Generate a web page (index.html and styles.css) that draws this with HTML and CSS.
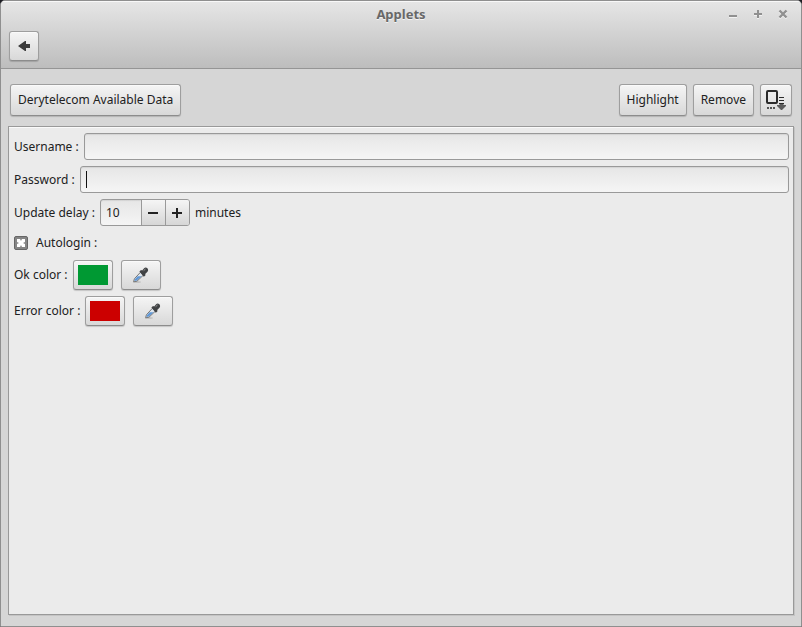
FILE: index.html
```html
<!DOCTYPE html>
<html lang="en">
<head>
<meta charset="utf-8">
<title>Applets</title>
<link rel="stylesheet" href="styles.css">
</head>
<body>
<div class="window">
  <header class="header">
    <div class="titlebar">
      <h1 class="title">Applets</h1>
      <div class="controls">
        <button class="control" type="button" aria-label="Minimize"><svg width="10" height="10" viewBox="0 0 10 10"><path d="M1 7h8" stroke-width="2"/></svg></button>
        <button class="control" type="button" aria-label="Maximize"><svg width="10" height="10" viewBox="0 0 10 10"><path d="M1 5h8M5 1v8" stroke-width="2"/></svg></button>
        <button class="control" type="button" aria-label="Close"><svg width="10" height="10" viewBox="0 0 10 10"><path d="M1.500 1.500l7 7M8.500 1.500l-7 7" stroke-width="2.400"/></svg></button>
      </div>
    </div>
    <nav class="navbar">
      <button class="button back" type="button" aria-label="Back"><svg width="12" height="10" viewBox="0 0 12 10"><path d="M0 5L7 0h1v3h4v4H8v3H7z" fill="#3c3c3c"/></svg></button>
    </nav>
  </header>
  <main class="content">
    <div class="toolbar">
      <button class="button" type="button">Derytelecom Available Data</button>
      <div class="actions">
        <button class="button" type="button">Highlight</button>
        <button class="button" type="button">Remove</button>
        <button class="button more" type="button" aria-label="More options">
          <svg width="20" height="20" viewBox="0 0 20 20">
            <rect x="1" y="1" width="10" height="12" rx="1" fill="none" stroke="#2b2b2b" stroke-width="2"/>
            <path d="M13 7.500h5M13 10.500h5M13 13.500h5" stroke="#2b2b2b"/>
            <path d="M13.500 14h4v1H20v1l-4 4h-1l-4-4v-1h2.500z" fill="#5c5c5c"/>
            <path d="M1 17h2v2H1zM4 17h2v2H4zM7 17h2v2H7z" fill="#555"/>
          </svg>
        </button>
      </div>
    </div>
    <form class="panel">
      <div class="row">
        <label for="username">Username :</label>
        <input class="field" id="username" type="text">
      </div>
      <div class="row">
        <label for="password">Password :</label>
        <div class="field-wrap"><input class="field" id="password" type="password"></div>
      </div>
      <div class="row">
        <label for="delay">Update delay :</label>
        <div class="spinner">
          <input class="spin-value" id="delay" type="text" inputmode="numeric" value="10">
          <button class="spin-step" type="button" aria-label="Decrease"><svg width="12" height="12" viewBox="0 0 12 12"><path d="M1 6h10" stroke="#222" stroke-width="2"/></svg></button>
          <button class="spin-step" type="button" aria-label="Increase"><svg width="12" height="12" viewBox="0 0 12 12"><path d="M1 6h10M6 1v10" stroke="#222" stroke-width="2"/></svg></button>
        </div>
        <span>minutes</span>
      </div>
      <div class="row row-check">
        <input class="check" id="autologin" type="checkbox" checked>
        <label for="autologin">Autologin :</label>
      </div>
      <div class="row">
        <label for="ok-color">Ok color :</label>
        <div class="color-group">
          <input class="button swatch" id="ok-color" type="color" value="#009933">
          <button class="button picker" type="button" aria-label="Pick ok color"><svg width="16" height="16" viewBox="0 0 16 16"><use href="#dropper"/></svg></button>
        </div>
      </div>
      <div class="row">
        <label for="error-color">Error color :</label>
        <div class="color-group">
          <input class="button swatch" id="error-color" type="color" value="#cc0000">
          <button class="button picker" type="button" aria-label="Pick error color"><svg width="16" height="16" viewBox="0 0 16 16"><use href="#dropper"/></svg></button>
        </div>
      </div>
    </form>
  </main>
</div>
<svg class="symbols" aria-hidden="true">
  <symbol id="dropper" viewBox="0 0 16 16">
    <ellipse cx="4" cy="15" rx="4" ry="1" fill="#000" opacity=".12"/>
    <path d="M0.600 14.800L1.400 11.800 7.500 5.200l3 2.800L4 14.200z" fill="#dfe6ee" stroke="#777" stroke-width="1"/>
    <path d="M1.300 14.100l.8-2L4.700 9.300h4L3.800 13.600z" fill="#5f97d6"/>
    <path d="M6.400 4.600L8 3l1.200.4 1.900-2.200Q12.600-.2 14.400 1.200 15.800 3 14.500 4.800L12.200 7l.3 1.300-1.700 1.500z" fill="#404244"/>
    <path d="M10.600 3.700l1.900-1.700" stroke="#999" stroke-width="1"/>
  </symbol>
</svg>
</body>
</html>
```
FILE: styles.css
```css
* {
  box-sizing: border-box;
}

body {
  margin: 0;
  background: #1c1c22;
  color: #212121;
  font: 12px/16px "Noto Sans", sans-serif;
}

input,
button {
  margin: 0;
  font: inherit;
  color: inherit;
}

svg {
  display: block;
}

.symbols {
  position: absolute;
  width: 0;
  height: 0;
}

.window {
  display: flex;
  flex-direction: column;
  min-height: 100vh;
  border: 1px solid #8f8f8f;
  border-radius: 5px 5px 0 0;
  background: #d6d6d6;
  overflow: hidden;
}

.header {
  border-bottom: 1px solid #959595;
  background: linear-gradient(#e6e6e6, #bdbdbd);
  box-shadow: inset 0 1px #f8f8f8;
  padding-bottom: 7px;
}

.titlebar {
  display: grid;
  grid-template-columns: 1fr auto 1fr;
  align-items: center;
  height: 30px;
  padding: 0 13px 4px;
}

.title {
  grid-column: 2;
  margin: 0;
  color: #686868;
  font-size: 13px;
  line-height: 18px;
  text-shadow: 0 1px #f4f4f4;
}

.controls {
  display: flex;
  justify-content: flex-end;
  gap: 15px;
}

.control {
  border: 0;
  padding: 0;
  background: none;
}

.control svg {
  fill: none;
  stroke: #909090;
  filter: drop-shadow(0 1px 0 #f2f2f2);
}

.navbar {
  padding: 0 8px;
}

.button {
  display: flex;
  align-items: center;
  justify-content: center;
  height: 32px;
  border: 1px solid #9e9e9e;
  border-bottom-color: #8c8c8c;
  border-radius: 3px;
  padding: 0 7px;
  background: linear-gradient(#f5f5f5, #d8d8d8);
  box-shadow: inset 0 1px #fafafa, 0 1px 1px rgba(0, 0, 0, 0.16);
}

.back {
  width: 30px;
  height: 30px;
  padding: 0;
}

.content {
  display: flex;
  flex: 1;
  flex-direction: column;
  gap: 10px;
  padding: 15px 7px 11px;
}

.toolbar {
  display: flex;
  justify-content: space-between;
  padding: 0 2px;
}

.actions {
  display: flex;
  gap: 6px;
}

.more {
  width: 32px;
  padding: 0;
}

.panel {
  display: flex;
  flex: 1;
  flex-direction: column;
  gap: 6px;
  border: 1px solid #999;
  padding: 6px 4px 6px 5px;
  background: #ebebeb;
  box-shadow: inset 0 1px #fafafa, 1px 1px #c4c4c4;
}

.row {
  display: flex;
  align-items: center;
  gap: 5px;
}

.row-check {
  gap: 8px;
  height: 22px;
}

.field,
.spinner {
  height: 27px;
  border: 1px solid #999;
  border-radius: 3px;
  background: linear-gradient(#e6e6e6, #f5f5f5);
  box-shadow: inset 0 1px 1px rgba(0, 0, 0, 0.08);
}

.field {
  flex: 1;
  min-width: 0;
  padding: 0 5px;
  outline: none;
}

.field-wrap {
  position: relative;
  display: flex;
  flex: 1;
}

/* Text cursor of the active field */
.field-wrap::before {
  content: "";
  position: absolute;
  top: 5px;
  left: 6px;
  width: 1px;
  height: 17px;
  background: #111;
}

.spinner {
  display: flex;
  overflow: hidden;
}

.spin-value {
  width: 40px;
  border: 0;
  padding: 0 5px;
  background: none;
  outline: none;
}

.spin-step {
  display: flex;
  align-items: center;
  justify-content: center;
  width: 24px;
  border: 0;
  border-left: 1px solid #999;
  padding: 0;
  background: linear-gradient(#f5f5f5, #d6d6d6);
}

.check {
  width: 14px;
  height: 14px;
  border: 1px solid #666;
  border-radius: 2px;
  appearance: none;
  background: #858585;
  display: grid;
  place-items: center;
}

.check:checked::before {
  content: "";
  width: 8px;
  height: 8px;
  background: #fff;
  clip-path: polygon(0 0, 38% 0, 50% 25%, 62% 0, 100% 0, 100% 38%, 75% 50%, 100% 62%, 100% 100%, 62% 100%, 50% 75%, 38% 100%, 0 100%, 0 62%, 25% 50%, 0 38%);
}

.color-group {
  display: flex;
  gap: 8px;
}

.swatch,
.picker {
  width: 40px;
  height: 30px;
  padding: 4px;
}

.swatch::-webkit-color-swatch-wrapper {
  padding: 0;
}

.swatch::-webkit-color-swatch {
  border: 0;
}
```
